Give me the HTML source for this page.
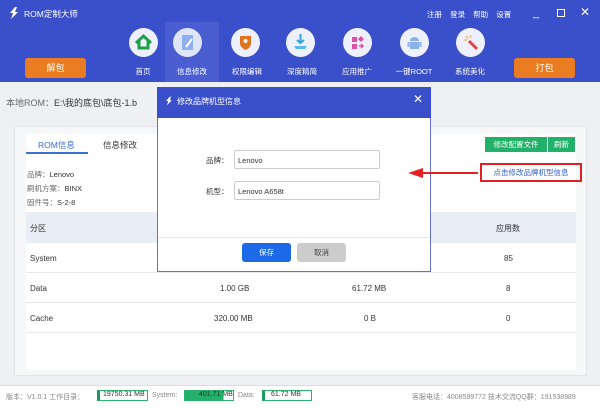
<!DOCTYPE html>
<html><head><meta charset="utf-8"><style>
*{margin:0;padding:0;box-sizing:border-box}
body{width:600px;height:408px;overflow:hidden;font-family:"Liberation Sans","Noto Sans CJK SC",sans-serif;font-size:8px;color:#333;background:#eef0f4;position:relative}
.a{position:absolute}
.hdr{left:0;top:0;width:600px;height:82px;background:#3a4fca}
.circ{width:29px;height:29px;border-radius:50%;background:#eef1fb;top:28px}
.lbl{top:66px;color:#fff;font-size:7.5px;width:60px;text-align:center}
.ob{background:#ea7c22;color:#fff;border-radius:3px;text-align:center;line-height:20px;font-size:9px;top:58px;width:61px;height:20px}
.row{left:28px;width:550px;height:30px;border-bottom:1px solid #e6e8ee;background:#fff}
.row span{position:absolute;top:11px}
</style></head><body>
<div class="a hdr"></div>
<div class="a" style="left:165px;top:22px;width:54px;height:60px;background:#4a5ed2"></div>
<svg class="a" style="left:7px;top:6px" width="14" height="14" viewBox="0 0 14 14"><path d="M8 1L3 7h3l-2 6 7-7H8l2-5z" fill="#fff"/></svg>
<div class="a" style="left:24px;top:8px;color:#fff;font-size:8.5px">ROM定制大师</div>
<div class="a" style="left:427px;top:9px;color:#fff;font-size:7.5px;word-spacing:6px">注册 登录 帮助 设置</div>
<div class="a" style="left:533px;top:7px;color:#fff;font-size:11px">_</div>
<div class="a" style="left:557px;top:9px;width:8px;height:8px;border:1.5px solid #fff"></div>
<div class="a" style="left:580px;top:5px;color:#fff;font-size:12px">✕</div>
<div class="a ob" style="left:25px">解包</div>
<div class="a ob" style="left:514px">打包</div>
<div class="a circ" style="left:129px"><svg width="29" height="29"><path d="M7 15L14.5 8 22 15M10 13v7h9v-7" fill="none" stroke="#21a04a" stroke-width="3"/></svg></div>
<div class="a circ" style="left:173px;background:#dfe6fb"><svg width="29" height="29"><rect x="9" y="7" width="11" height="15" fill="#8fb0f0"/><path d="M13 19l6-8" stroke="#fff" stroke-width="2"/></svg></div>
<div class="a circ" style="left:231px"><svg width="29" height="29"><path d="M9 8h11v7c0 4-3 6-5.5 7C12 21 9 19 9 15z" fill="#e0731d"/><circle cx="14.5" cy="13" r="2" fill="#fff"/></svg></div>
<div class="a circ" style="left:286px"><svg width="29" height="29"><path d="M14.5 6v9M11 12l3.5 3 3.5-3" stroke="#3aa0e0" stroke-width="2" fill="none"/><path d="M8 18h13l-2 3H10z" fill="#5cb8ea"/></svg></div>
<div class="a circ" style="left:343px"><svg width="29" height="29"><rect x="9" y="9" width="5" height="5" fill="#e04fa8"/><rect x="9" y="16" width="5" height="5" fill="#e04fa8"/><path d="M18 8l3 3-3 3-3-3z" fill="#e04fa8"/><path d="M16 18h4M18 16l2 2-2 2" stroke="#e04fa8" stroke-width="1.5" fill="none"/></svg></div>
<div class="a circ" style="left:400px"><svg width="29" height="29"><path d="M10 13a4.5 4 0 0 1 9 0z" fill="#8ab0ec"/><rect x="10" y="14" width="9" height="7" fill="#8ab0ec"/><rect x="7.5" y="14" width="2" height="5" fill="#8ab0ec"/><rect x="19.5" y="14" width="2" height="5" fill="#8ab0ec"/></svg></div>
<div class="a circ" style="left:456px"><svg width="29" height="29"><path d="M13 13l8 8" stroke="#e04848" stroke-width="3"/><path d="M10 8l2 3M8 12l3 0M15 7l-1 3" stroke="#f0a040" stroke-width="1"/></svg></div>
<div class="a lbl" style="left:113px">首页</div>
<div class="a lbl" style="left:162px">信息修改</div>
<div class="a lbl" style="left:217px">权限编辑</div>
<div class="a lbl" style="left:272px">深度精简</div>
<div class="a lbl" style="left:327px">应用推广</div>
<div class="a lbl" style="left:384px">一键ROOT</div>
<div class="a lbl" style="left:440px">系统美化</div>
<div class="a" style="left:6px;top:96px;font-size:9px;color:#666">本地ROM：<span style="color:#333">E:\我的底包\底包-1.b</span></div>
<div class="a" style="left:14px;top:126px;width:573px;height:250px;background:#f6f7f9;border:1px solid #e2e4e9"></div>
<div class="a" style="left:26px;top:134px;width:550px;height:80px;background:#fff"></div>
<div class="a" style="left:38px;top:139px;color:#3a6fd8;font-size:8.5px">ROM信息</div>
<div class="a" style="left:26px;top:152px;width:62px;height:2px;background:#3a6fd8"></div>
<div class="a" style="left:103px;top:139px;font-size:8.5px">信息修改</div>
<div class="a" style="left:27px;top:168px;color:#666;font-size:7.5px;line-height:14px">品牌：<span style="color:#333">Lenovo</span><br>刷机方案：<span style="color:#333">BINX</span><br>固件号：<span style="color:#333">S-2-8</span></div>
<div class="a" style="left:485px;top:137px;width:62px;height:15px;background:#21b168;color:#fff;text-align:center;line-height:15px;font-size:7.5px">修改配置文件</div>
<div class="a" style="left:548px;top:137px;width:27px;height:15px;background:#21b168;color:#fff;text-align:center;line-height:15px;font-size:7.5px">刷新</div>
<div class="a" style="left:480px;top:163px;width:102px;height:19px;border:2px solid #e52020;color:#2d5fd0;text-align:center;line-height:15px;font-size:7.5px">点击修改品牌机型信息</div>
<div class="a" style="left:26px;top:212px;width:550px;height:31px;background:#e9edf5"></div>
<div class="a" style="left:30px;top:223px">分区</div>
<div class="a" style="left:496px;top:223px">应用数</div>
<div class="a row" style="top:243px;left:26px"><span style="left:4px">System</span><span style="left:478px">85</span></div>
<div class="a row" style="top:273px;left:26px"><span style="left:4px">Data</span><span style="left:194px">1.00 GB</span><span style="left:326px">61.72 MB</span><span style="left:480px">8</span></div>
<div class="a row" style="top:303px;left:26px"><span style="left:4px">Cache</span><span style="left:188px">320.00 MB</span><span style="left:338px">0 B</span><span style="left:480px">0</span></div>
<div class="a" style="left:26px;top:333px;width:550px;height:37px;background:#fff"></div>
<div class="a" style="left:157px;top:87px;width:274px;height:185px;background:#fff;border:1px solid #6470d0"></div>
<div class="a" style="left:157px;top:87px;width:274px;height:31px;background:#3a4fca"></div>
<svg class="a" style="left:164px;top:95px" width="10" height="12" viewBox="0 0 14 14"><path d="M8 1L3 7h3l-2 6 7-7H8l2-5z" fill="#fff"/></svg>
<div class="a" style="left:177px;top:96px;color:#fff;font-size:8px">修改品牌机型信息</div>
<div class="a" style="left:413px;top:92px;color:#fff;font-size:12px">✕</div>
<div class="a" style="left:206px;top:155px;font-size:7.5px">品牌：</div>
<div class="a" style="left:234px;top:150px;width:146px;height:19px;border:1px solid #ccc;border-radius:2px;padding:5px 3px;font-size:7.5px">Lenovo</div>
<div class="a" style="left:206px;top:186px;font-size:7.5px">机型：</div>
<div class="a" style="left:234px;top:181px;width:146px;height:19px;border:1px solid #ccc;border-radius:2px;padding:5px 3px;font-size:7.5px">Lenovo A658t</div>
<div class="a" style="left:158px;top:237px;width:272px;height:1px;background:#e6e6e6"></div>
<div class="a" style="left:242px;top:243px;width:49px;height:19px;background:#1c6ae8;color:#fff;border-radius:3px;text-align:center;line-height:19px;font-size:7.5px">保存</div>
<div class="a" style="left:297px;top:243px;width:49px;height:19px;background:#ccc;color:#444;border-radius:3px;text-align:center;line-height:19px;font-size:7.5px">取消</div>
<svg class="a" style="left:408px;top:168px" width="70" height="10"><path d="M12 5H70" stroke="#e52020" stroke-width="2"/><path d="M0 5l15-5v10z" fill="#e52020"/></svg>
<div class="a" style="left:0;top:385px;width:600px;height:23px;background:#fff;border-top:1px solid #ddd"></div>
<div class="a" style="left:6px;top:392px;color:#888;font-size:7px">版本：V1.0.1 工作目录：</div>
<div class="a" style="left:97px;top:390px;width:51px;height:11px;border:1px solid #2bb36e;font-size:7px;padding-left:3px;color:#333;border-left:3px solid #1f9a5b">19750.31 MB</div>
<div class="a" style="left:152px;top:392px;color:#888;font-size:7px">System:</div>
<div class="a" style="left:184px;top:390px;width:50px;height:11px;border:1px solid #2bb36e;background:linear-gradient(90deg,#22b06a 80%,#fff 80%);font-size:7px;padding-left:14px;color:#333">401.71 MB</div>
<div class="a" style="left:238px;top:392px;color:#888;font-size:7px">Data:</div>
<div class="a" style="left:262px;top:390px;width:50px;height:11px;border:1px solid #2bb36e;border-left:3px solid #1f9a5b;font-size:7px;padding-left:6px;color:#333">61.72 MB</div>
<div class="a" style="left:412px;top:392px;color:#888;font-size:7px">客服电话：4008599772 技术交流QQ群：191538989</div>
</body></html>
